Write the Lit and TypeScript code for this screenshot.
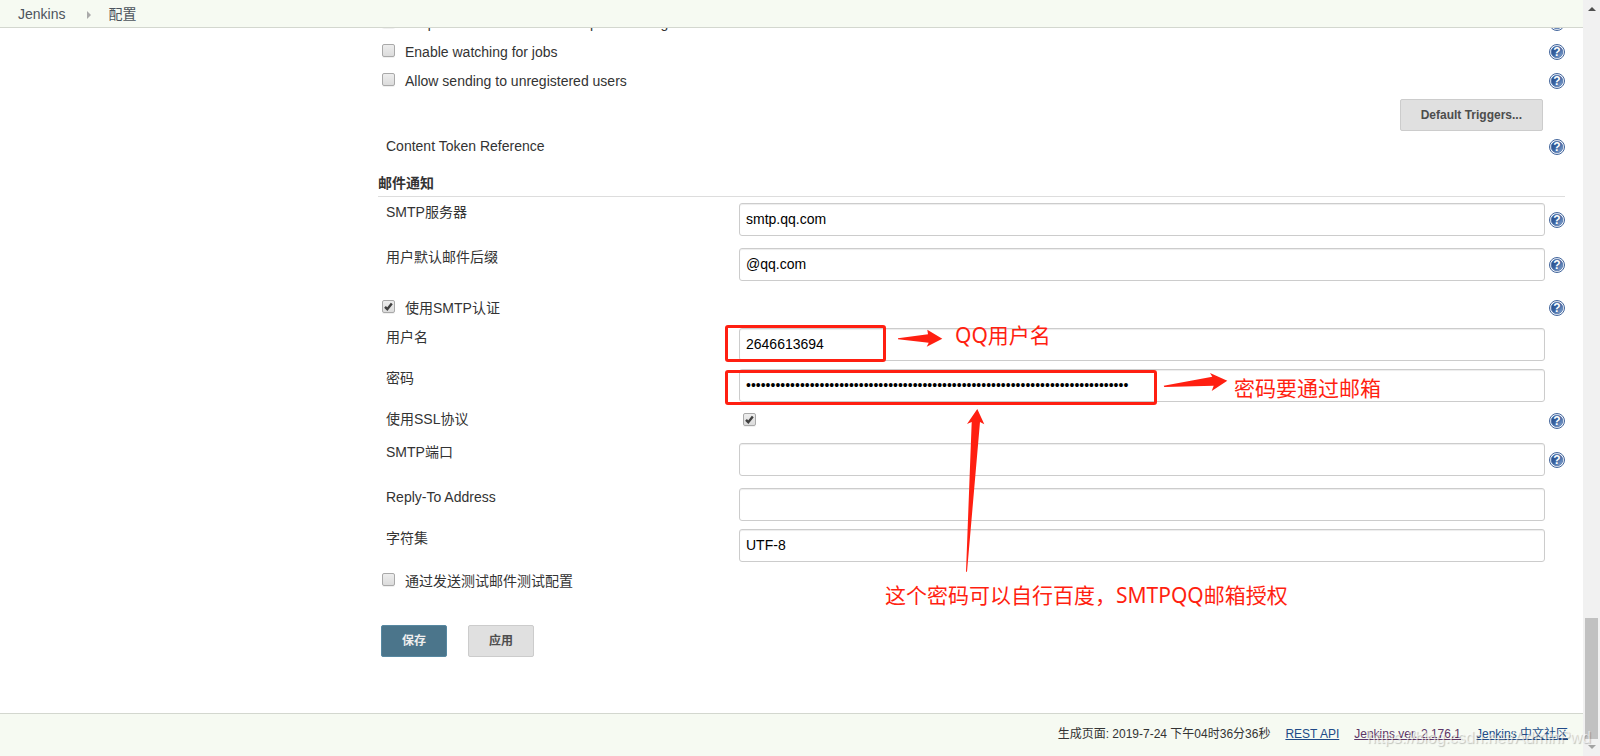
import { LitElement, html, css, svg, nothing } from "lit";
import { customElement, property } from "lit/decorators.js";

@customElement("help-link")
class HelpLink extends LitElement {
  @property() topic = "";

  static styles = css`
    :host {
      display: block;
      width: 16px;
      height: 16px;
    }
    .link {
      display: block;
    }
    .icon {
      display: block;
    }
    .mark {
      font: bold 12px "Liberation Sans", Arial, sans-serif;
      fill: #fff;
    }
  `;

  render() {
    return html`<a class="link" href="#help" aria-label="Help: ${this.topic}">
      <svg class="icon" width="16" height="16" viewBox="0 0 16 16" aria-hidden="true">
        <defs>
          <linearGradient id="disc" x1="0" y1="0" x2="1" y2="1">
            <stop offset="0" stop-color="#1f4585" />
            <stop offset=".5" stop-color="#3c64a0" />
            <stop offset="1" stop-color="#8fb0da" />
          </linearGradient>
        </defs>
        <circle cx="8" cy="8" r="7.5" fill="#f4f7fc" stroke="#42659b" />
        <circle cx="8" cy="8" r="5.8" fill="url(#disc)" stroke="#4a6fa8" stroke-width=".7" />
        <text class="mark" x="8" y="12" text-anchor="middle">?</text>
      </svg>
    </a>`;
  }
}

@customElement("app-root")
class AppRoot extends LitElement {
  static styles = css`
    :host {
      display: block;
      font: 14px/20px "Liberation Sans", Arial, "Noto Sans CJK SC", sans-serif;
      color: #333;
    }
    .window {
      position: relative;
      display: flex;
      min-height: 100vh;
      overflow: hidden;
      background: #fff;
    }
    .page {
      flex: 1;
      min-width: 0;
      display: flex;
      flex-direction: column;
    }
    .crumbs {
      position: relative;
      z-index: 1;
      display: flex;
      align-items: center;
      gap: 17px;
      height: 27px;
      padding-left: 18px;
      background: #f6faf2;
      border-bottom: 1px solid #d3d7cf;
    }
    .crumb {
      color: #4d545d;
      text-decoration: none;
    }
    .chevron {
      margin: 2px 0 0 5px;
      border: solid transparent;
      border-width: 4px 0 4px 4px;
      border-left-color: #aaa;
    }
    .form {
      margin: -18px 18px 0 378px;
      padding-bottom: 56px;
    }
    .row {
      display: grid;
      grid-template-columns: 361px 1fr 16px;
      align-items: start;
    }
    .row > help-link {
      grid-column: 3;
    }
    .label {
      padding: 3px 0 0 8px;
    }
    .check {
      grid-column: 1 / 3;
      display: flex;
      height: 29px;
      padding-left: 4px;
    }
    .check .box {
      margin-top: 5px;
    }
    .check .caption {
      padding: 3px 0 0 10px;
    }
    .row.toggle > help-link {
      margin-top: 5px;
    }
    .row.spaced {
      padding-top: 6px;
    }
    .row.gapped {
      padding-top: 2px;
    }
    .box {
      position: relative;
      display: block;
      width: 13px;
      height: 13px;
    }
    .checkbox {
      appearance: none;
      display: block;
      box-sizing: border-box;
      width: 13px;
      height: 13px;
      margin: 0;
      border: 1px solid #a9a9a9;
      border-radius: 2px;
      background: linear-gradient(#ededed, #dcdcdc);
      box-shadow: 0 1px 0 rgba(0, 0, 0, 0.06);
    }
    .tick {
      position: absolute;
      inset: 0;
      pointer-events: none;
    }
    .field {
      padding: 4px 0;
      margin-right: 4px;
    }
    .row.helped .field {
      padding-bottom: 8px;
    }
    .row.helped > help-link {
      margin-top: 13px;
    }
    .input {
      display: block;
      box-sizing: border-box;
      width: 100%;
      height: 33px;
      padding: 5px 6px 7px;
      font: inherit;
      color: #000;
      background: #fff;
      border: 1px solid #ccc;
      border-radius: 3px;
      box-shadow: inset 0 1px 1px rgba(0, 0, 0, 0.075);
    }
    .row.ssl {
      height: 33px;
    }
    .row.ssl .box {
      margin: 7px 0 0 4px;
    }
    .row.ssl > help-link {
      margin-top: 7px;
    }
    .row.token {
      height: 32px;
    }
    .row.token > help-link {
      margin-top: 6px;
    }
    .actions {
      display: flex;
      justify-content: flex-end;
      padding: 2px 22px 2px 0;
    }
    .button {
      height: 32px;
      padding: 0 20px;
      font: bold 12px/18px "Liberation Sans", Arial, "Noto Sans CJK SC", sans-serif;
      color: #4d4d4d;
      background: #e0e0e0;
      border: 1px solid #ccc;
      border-radius: 2px;
    }
    .button.primary {
      color: #eee;
      background: #4b758b;
      border-color: #5788a1;
    }
    .section {
      box-sizing: border-box;
      height: 32px;
      margin: 0 0 2px;
      padding-top: 8px;
      font-size: 14px;
      line-height: 20px;
      border-bottom: 1px solid #ddd;
    }
    .buttons {
      display: flex;
      gap: 21px;
      padding: 28px 0 0 3px;
    }
    .footer {
      display: flex;
      justify-content: flex-end;
      gap: 15px;
      margin-top: auto;
      padding: 11px 15px 13px;
      font-size: 12px;
      line-height: 18px;
      background: #f6faf2;
      border-top: 1px solid #d3d7cf;
    }
    .link {
      color: #204a87;
    }
    .link.visited {
      color: #5c3566;
    }
    .scroll {
      display: flex;
      flex-direction: column;
      align-items: center;
      box-sizing: border-box;
      width: 17px;
      padding: 7px 0;
      background: #f1f1f1;
    }
    .up,
    .down {
      border: solid transparent;
      border-width: 0 4px 4px;
      border-bottom-color: #505050;
    }
    .down {
      border-width: 4px 4px 0;
      border-top-color: #a3a3a3;
      margin-top: 6px;
    }
    .thumb {
      width: 13px;
      height: 121px;
      margin-top: auto;
      background: #c1c1c1;
    }
    .marks {
      position: absolute;
      inset: 0;
      z-index: 2;
      pointer-events: none;
      color: #ff1f11;
      font: 21px/28px "Noto Sans", "Noto Sans CJK SC", sans-serif;
    }
    .frame {
      position: absolute;
      box-sizing: border-box;
      left: 725px;
      border: 3px solid #ff1f11;
      border-radius: 3px;
    }
    .frame.user {
      top: 325px;
      width: 161px;
      height: 37px;
    }
    .frame.pass {
      top: 370px;
      width: 432px;
      height: 35px;
    }
    .arrows {
      position: absolute;
      left: 0;
      top: 0;
      fill: #ff1f11;
    }
    .note {
      position: absolute;
      white-space: nowrap;
    }
    .note.user {
      left: 955px;
      top: 321px;
    }
    .note.pass {
      left: 1234px;
      top: 374px;
    }
    .note.code {
      left: 885px;
      top: 581px;
    }
    .watermark {
      position: absolute;
      right: 9px;
      bottom: 6px;
      font: 16px/24px "Liberation Sans", Arial, sans-serif;
      color: rgba(255, 255, 255, 0.6);
      text-shadow: 1px 1px 1px rgba(0, 0, 0, 0.22);
    }
  `;

  private box(id: string, checked = false) {
    return html`<span class="box">
      <input class="checkbox" type="checkbox" id=${id} .checked=${checked} />
      ${checked
        ? html`<svg class="tick" width="13" height="13" viewBox="0 0 13 13" aria-hidden="true">
            <path d="M3 6.8 L5.3 9.2 L9.8 3.4" fill="none" stroke="#404040" stroke-width="2.4" />
          </svg>`
        : nothing}
    </span>`;
  }

  private toggle(id: string, text: string, extra = "", checked = false, help = true) {
    return html`<div class="row toggle ${extra}">
      <div class="check">
        ${this.box(id, checked)}
        <label class="caption" for=${id}>${text}</label>
      </div>
      ${help ? html`<help-link topic=${text}></help-link>` : nothing}
    </div>`;
  }

  private field(id: string, text: string, value: string, help = false, type = "text") {
    return html`<div class="row ${help ? "helped" : ""}">
      <label class="label" for=${id}>${text}</label>
      <div class="field"><input class="input" id=${id} type=${type} .value=${value} /></div>
      ${help ? html`<help-link topic=${text}></help-link>` : nothing}
    </div>`;
  }

  render() {
    return html`<div class="window">
      <div class="page">
        <nav class="crumbs">
          <a class="crumb" href="#home">Jenkins</a>
          <span class="chevron"></span>
          <a class="crumb" href="#configure">配置</a>
        </nav>
        <form class="form">
          ${this.toggle("admin", "Require Administrator for Template Testing")}
          ${this.toggle("watch", "Enable watching for jobs")}
          ${this.toggle("unregistered", "Allow sending to unregistered users")}
          <div class="actions">
            <button class="button" type="button">Default Triggers...</button>
          </div>
          <div class="row token">
            <span class="label">Content Token Reference</span>
            <help-link topic="Content Token Reference"></help-link>
          </div>
          <h2 class="section">邮件通知</h2>
          ${this.field("server", "SMTP服务器", "smtp.qq.com", true)}
          ${this.field("suffix", "用户默认邮件后缀", "@qq.com", true)}
          ${this.toggle("auth", "使用SMTP认证", "spaced", true)}
          ${this.field("user", "用户名", "2646613694")}
          ${this.field("password", "密码", "x".repeat(78), false, "password")}
          <div class="row ssl">
            <label class="label" for="ssl">使用SSL协议</label>
            ${this.box("ssl", true)}
            <help-link topic="使用SSL协议"></help-link>
          </div>
          ${this.field("port", "SMTP端口", "", true)}
          ${this.field("reply", "Reply-To Address", "")}
          ${this.field("charset", "字符集", "UTF-8")}
          ${this.toggle("test", "通过发送测试邮件测试配置", "gapped", false, false)}
          <div class="buttons">
            <button class="button primary" type="button">保存</button>
            <button class="button" type="button">应用</button>
          </div>
        </form>
        <footer class="footer">
          <span>生成页面: 2019-7-24 下午04时36分36秒</span>
          <a class="link" href="#api">REST API</a>
          <a class="link visited" href="#version">Jenkins ver. 2.176.1</a>
          <a class="link" href="#community">Jenkins 中文社区</a>
        </footer>
      </div>
      <div class="scroll" aria-hidden="true">
        <span class="up"></span>
        <span class="thumb"></span>
        <span class="down"></span>
      </div>
      <div class="marks">
        <div class="frame user"></div>
        <div class="frame pass"></div>
        <svg class="arrows" width="1240" height="580" viewBox="0 0 1240 580" aria-hidden="true">
          ${[
            "M898 338.3 L928 334.3 L927.3 329.7 L942.3 338.7 L926.7 346.7 L928.7 342.7 L898 339.3 Z",
            "M1163.7 385.7 L1212.3 376.7 L1210 373 L1227.3 380.7 L1211.7 391 L1213.7 385.7 L1164.3 387 Z",
            "M966 571.7 L971.7 422 L967 424 L977.3 409 L984.3 424.3 L980 422 L967 571.7 Z",
          ].map((d) => svg`<path d=${d} />`)}
        </svg>
        <span class="note user">QQ用户名</span>
        <span class="note pass">密码要通过邮箱</span>
        <span class="note code">这个密码可以自行百度，SMTPQQ邮箱授权</span>
        <span class="watermark">https://blog.csdn.net/AdminPwd</span>
      </div>
    </div>`;
  }
}
